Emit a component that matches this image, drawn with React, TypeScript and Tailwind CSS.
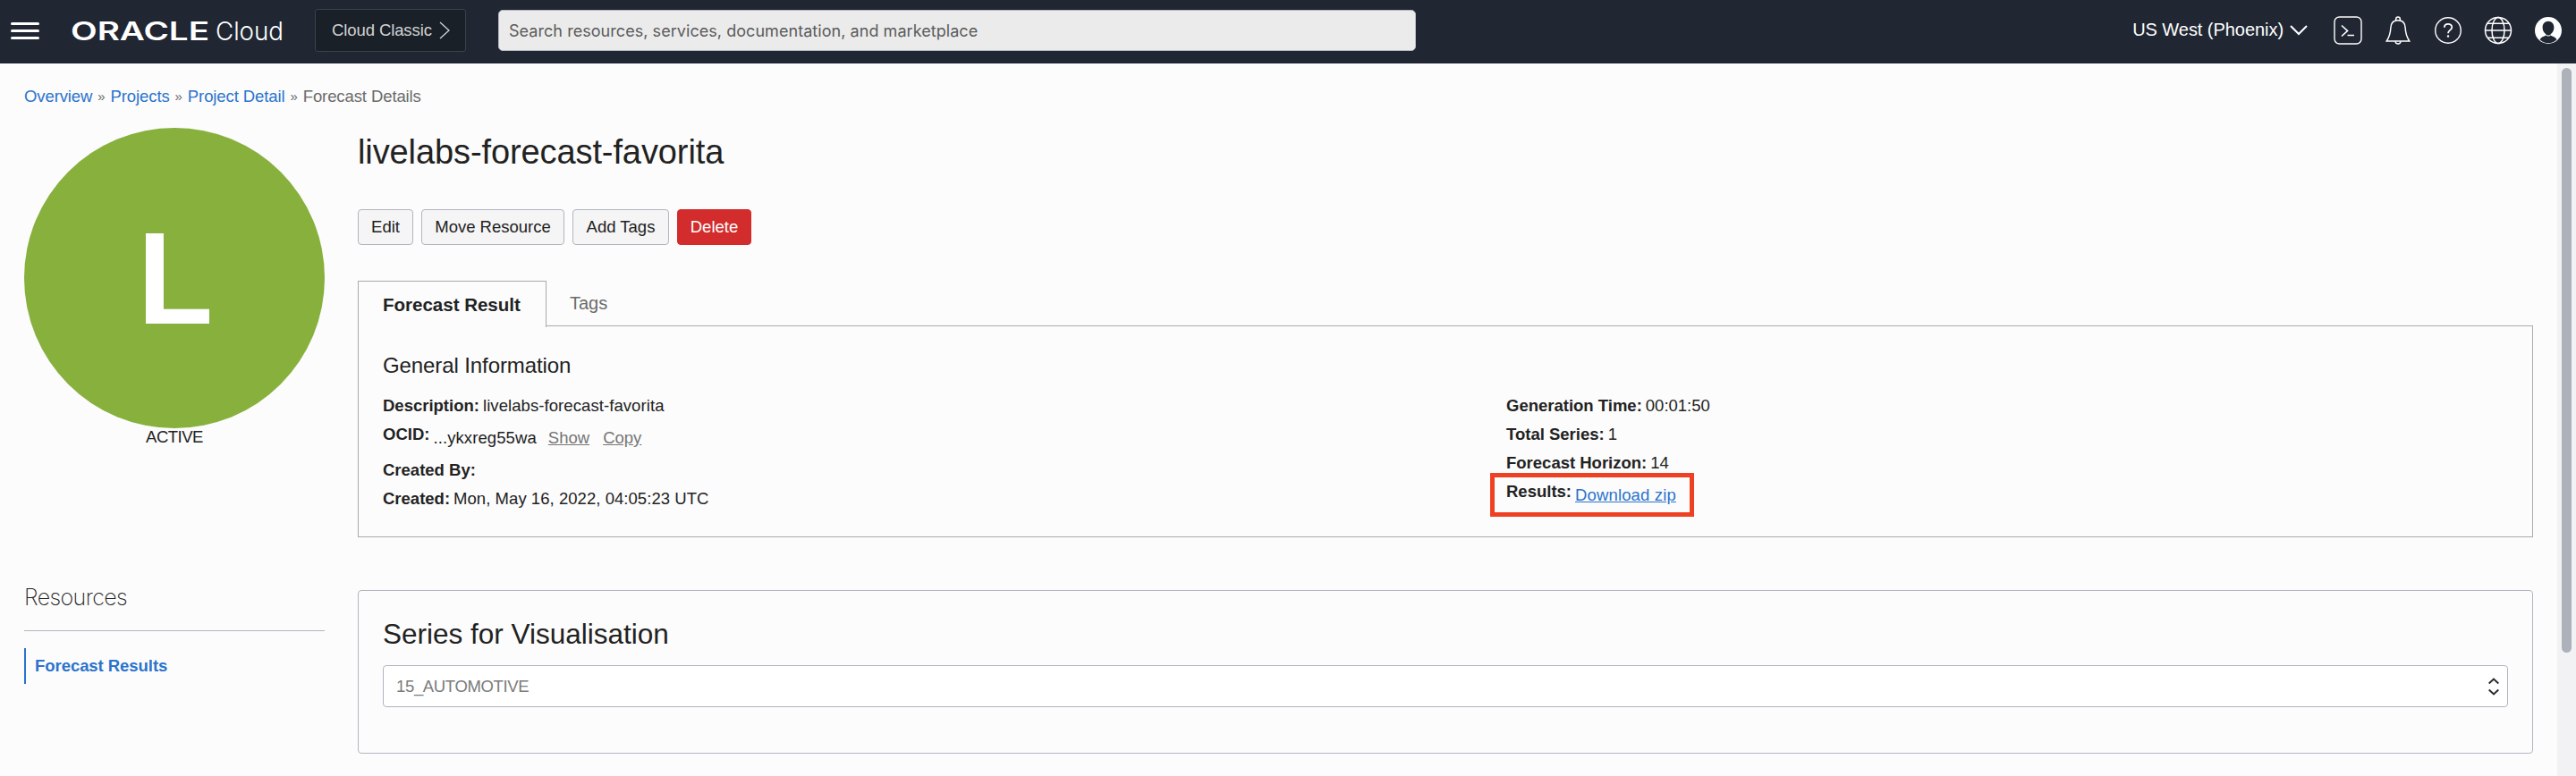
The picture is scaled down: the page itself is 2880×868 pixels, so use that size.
import type { ReactNode } from "react";

const sans = "font-['Liberation_Sans',Arial,sans-serif]";

function Header() {
  return (
    <header className="flex h-[71px] shrink-0 items-center bg-[#202733] pb-[3px] pl-3 text-white">
      <button className="flex h-[19px] w-8 flex-col justify-between" aria-label="Menu">
        <span className="h-[3px] w-full rounded-full bg-white" />
        <span className="h-[3px] w-full rounded-full bg-white" />
        <span className="h-[3px] w-full rounded-full bg-white" />
      </button>
      <svg className="ml-9 h-[40px] w-[240px]" viewBox="0 0 240 40" fill="#fff">
        <text x="-1" y="30.500" fontFamily="Inter, sans-serif" fontWeight="600" fontSize="28" textLength="155" lengthAdjust="spacingAndGlyphs">ORACLE</text>
        <text x="161" y="30.500" fontFamily="Inter, sans-serif" fontWeight="300" fontSize="28.500" textLength="76" lengthAdjust="spacingAndGlyphs">Cloud</text>
      </svg>
      <button className="ml-8 flex h-12 w-[169px] items-center rounded-[3px] border border-[#3a414b] bg-[#1a2027] pl-[18px] text-[18.500px] text-[#d2d3d5]">
        <span className="w-[120px] text-left tracking-[-0.1px] whitespace-nowrap">Cloud Classic</span>
        <svg className="h-5 w-3" viewBox="0 0 12 20" fill="none" stroke="#d2d3d5" strokeWidth="1.300">
          <path d="M1 1l10 9-10 9" />
        </svg>
      </button>
      <div className="ml-9 flex h-[46px] w-[1026px] items-center rounded-[5px] border border-[#b4b9c4] bg-[#ebebeb] pl-[11px] font-['Inter',sans-serif] text-[18px] text-[#5b5b5b]">
        <span className="tracking-[0.050px] whitespace-nowrap">Search resources, services, documentation, and marketplace</span>
      </div>
      <div className="ml-auto flex items-center pr-[15px]">
        <span className="pb-[2px] text-[20px] leading-6 tracking-[-0.050px] whitespace-nowrap">US West (Phoenix)</span>
        <svg className="ml-[7px] h-3 w-5" viewBox="0 0 20 12" fill="none" stroke="#fff" strokeWidth="2">
          <path d="M1 1l9 9 9-9" />
        </svg>
        <div className="ml-[29px] flex items-center gap-6">
          <svg className="size-8" viewBox="0 0 32 32" fill="none" stroke="#fff" strokeWidth="1.400">
            <rect x="1" y="1" width="30" height="30" rx="5.500" />
            <path strokeWidth="1.700" d="M9 10.500l6.500 6L9 22.500M15.500 21.500h7.500" />
          </svg>
          <svg className="size-8" viewBox="0 0 32 32" fill="none" stroke="#fff" strokeWidth="1.500">
            <path d="M3.300 28h25.400c-3.400-5.500-4.300-8.500-4.500-14.500C24 8 21 4.800 16 4.800S8 8 7.800 13.500C7.600 19.500 6.700 22.500 3.300 28z" />
            <path d="M13.700 5V3.300a2.300 2.300 0 0 1 4.600 0V5M13 28.200c.3 3.700 5.700 3.700 6 0" />
          </svg>
          <svg className="size-8" viewBox="0 0 32 32" fill="none" stroke="#fff" strokeWidth="1.400">
            <circle cx="16" cy="16" r="14.300" />
            <path strokeWidth="1.800" d="M11.800 12.800c0-5.200 8.500-5 8.500-.3 0 3.300-4.300 3-4.300 6.800" />
            <circle cx="16" cy="22.500" r="1.200" fill="#fff" stroke="none" />
          </svg>
          <svg className="size-8" viewBox="0 0 32 32" fill="none" stroke="#fff" strokeWidth="1.500">
            <circle cx="16" cy="16" r="14.500" />
            <ellipse cx="16" cy="16" rx="7" ry="14.500" />
            <path d="M1.500 16h29M4 8.300h24M4 24.300h24" />
          </svg>
          <svg className="size-8" viewBox="0 0 32 32">
            <circle cx="16" cy="16" r="15" fill="#fff" />
            <path fill="#202733" d="M16 5.800c-4 0-6.400 3-6.400 7 0 3.400 1.700 6.200 3.900 7.500v1.200c-2.500 1.400-5.500 2-7 4.700 2.500 2.700 6 4 9.500 4s7-1.300 9.500-4c-1.500-2.700-4.500-3.300-7-4.700v-1.200c2.200-1.300 3.900-4.100 3.900-7.500 0-4-2.400-7-6.400-7z" />
            <path fill="none" stroke="#fff" strokeWidth="1" d="M13.500 21.500q2.500 1.200 5 0" />
          </svg>
        </div>
      </div>
    </header>
  );
}

function Breadcrumb() {
  return (
    <nav className="flex h-6 items-center gap-[6px] text-[18.500px] leading-6 tracking-[-0.100px] whitespace-nowrap text-[#6b6b6b]">
      <a className="text-[#2b73cc]">Overview</a>
      <span className="text-[15px]">»</span>
      <a className="text-[#2b73cc]">Projects</a>
      <span className="text-[15px]">»</span>
      <a className="text-[#2b73cc]">Project Detail</a>
      <span className="text-[15px]">»</span>
      <span>Forecast Details</span>
    </nav>
  );
}

function Sidebar() {
  return (
    <aside className="w-[336px] shrink-0">
      <div className="flex size-[336px] items-center justify-center rounded-full bg-[#87b03d]">
        <span className="scale-x-94 pl-[2px] text-[147px] leading-[147px] font-bold text-white">L</span>
      </div>
      <div className="text-center text-[18.500px] leading-5 tracking-[-0.500px]">ACTIVE</div>
      <h2 className="mt-[153px] h-8 font-['Inter',sans-serif] text-[25px] leading-8 font-extralight tracking-[-0.600px] text-[#222]">Resources</h2>
      <div className="mt-[21px] border-t border-[#b0b5c0]" />
      <div className="mt-[19px] h-10 border-l-2 border-[#2b73cc] pl-[10px] text-[18.500px] leading-10 font-bold tracking-[-0.050px] text-[#2b73cc]">
        Forecast Results
      </div>
    </aside>
  );
}

const buttonClass = "flex h-10 items-center justify-center rounded-[4px] border text-[18.500px] whitespace-nowrap";

function Actions() {
  return (
    <div className="mt-[42px] flex gap-[9px]">
      <button className={`${buttonClass} w-[62px] border-[#b0b5c0] bg-[#f5f5f5]`}>Edit</button>
      <button className={`${buttonClass} w-[160px] border-[#b0b5c0] bg-[#f5f5f5]`}>Move Resource</button>
      <button className={`${buttonClass} w-[108px] border-[#b0b5c0] bg-[#f5f5f5]`}>Add Tags</button>
      <button className={`${buttonClass} w-[83px] border-[#d32c2c] bg-[#d32c2c] text-white`}>Delete</button>
    </div>
  );
}

function Field({ label, children, className = "" }: { label: string; children?: ReactNode; className?: string }) {
  return (
    <div className={`flex h-8 gap-[4px] whitespace-nowrap ${className}`}>
      <dt className="font-bold">{label}</dt>
      <dd className="flex">{children}</dd>
    </div>
  );
}

function ResultPanel() {
  return (
    <section className="mt-10">
      <div className="-mb-[2px] flex">
        <div className="relative z-10 h-[52px] w-[211px] border border-b-0 border-[#a8aaad] bg-[#fcfcfc] pl-[27px] text-[20.500px] leading-[52px] font-bold whitespace-nowrap">
          Forecast Result
        </div>
        <div className="pl-[26px] text-[20px] leading-[50px] text-[#6b6b6b]">Tags</div>
      </div>
      <div className="h-[237px] border border-[#a8aaad] pt-[29px] pl-[27px]">
        <h2 className="text-[24px] leading-[30px] tracking-[-0.100px]">General Information</h2>
        <div className="mt-[14px] grid grid-cols-[1256px_1fr] text-[18.500px] leading-8">
          <dl>
            <Field label="Description:"><span className="tracking-[0.080px]">livelabs-forecast-favorita</span></Field>
            <Field label="OCID:" className="mb-2">
              <span className="pt-1 tracking-[0.100px]">...ykxreg55wa</span>
              <a className="ml-[13px] pt-1 text-[#757575] underline">Show</a>
              <a className="ml-[15px] pt-1 text-[#757575] underline">Copy</a>
            </Field>
            <Field label="Created By:" />
            <Field label="Created:"><span className="tracking-[0.050px]">Mon, May 16, 2022, 04:05:23 UTC</span></Field>
          </dl>
          <dl>
            <Field label="Generation Time:">00:01:50</Field>
            <Field label="Total Series:">1</Field>
            <Field label="Forecast Horizon:">14</Field>
            <div className="relative">
              <Field label="Results:">
                <a className="pt-1 tracking-[0.150px] text-[#2b73cc] underline">Download zip</a>
              </Field>
              <div className="absolute -top-[5px] -left-[18px] h-[49px] w-[228px] border-5 border-[#ee4023]" />
            </div>
          </dl>
        </div>
      </div>
    </section>
  );
}

function SeriesCard() {
  return (
    <section className="mt-[59px] h-[183px] rounded-[4px] border border-[#b0b5c0] px-[27px] pt-7">
      <h2 className="text-[31.500px] leading-10 whitespace-nowrap">Series for Visualisation</h2>
      <div className="mt-[15px] flex h-[47px] items-center justify-between rounded-[4px] border border-[#b0b5c0] bg-white pr-[9px] pl-[14px] text-[18.500px] text-[#7b7b7b]">
        <span className="tracking-[-0.350px]">15_AUTOMOTIVE</span>
        <svg className="h-5 w-3" viewBox="0 0 12 20" fill="none" stroke="#2b2b2b" strokeWidth="2">
          <path d="M.7 6.500L6 1.500l5.300 5M.7 13.500l5.300 5 5.300-5" />
        </svg>
      </div>
    </section>
  );
}

export default function App() {
  return (
    <div className={`flex h-[868px] w-[2880px] flex-col overflow-hidden bg-[#fcfcfc] text-[#222] ${sans}`}>
      <Header />
      <div className="flex min-h-0 flex-1">
        <main className="flex-1 pt-[25px] pr-[27px] pl-[27px]">
          <Breadcrumb />
          <div className="mt-[23px] flex">
            <Sidebar />
            <div className="ml-[37px] min-w-0 flex-1 pt-[5px]">
              <h1 className="text-[38px] leading-[44px] tracking-[-0.100px] whitespace-nowrap">livelabs-forecast-favorita</h1>
              <Actions />
              <ResultPanel />
              <SeriesCard />
            </div>
          </div>
        </main>
        <div className="w-[21px] bg-[#f2f2f4] pt-[5px] pl-[5px]">
          <div className="h-[654px] w-[11px] rounded-full bg-[#adb1b9]" />
        </div>
      </div>
    </div>
  );
}
